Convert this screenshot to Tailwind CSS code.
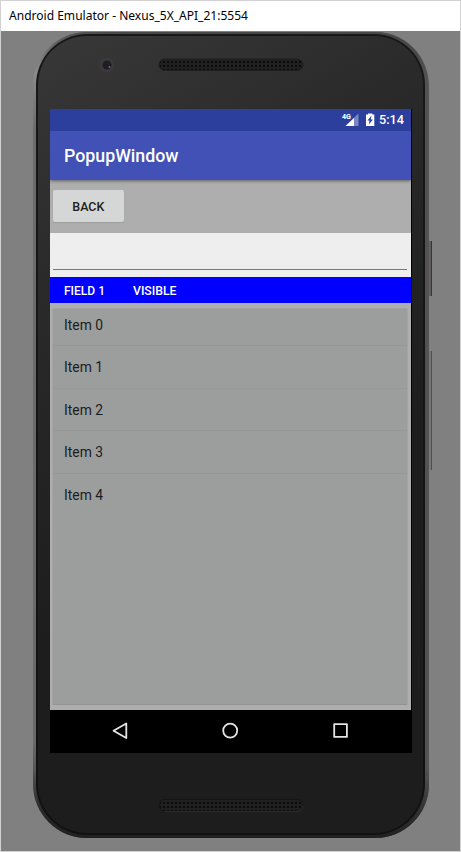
<!DOCTYPE html>
<html lang="en">
<head>
<meta charset="utf-8">
<title>Android Emulator</title>
<script src="https://cdn.jsdelivr.net/npm/@tailwindcss/browser@4"></script>
</head>
<body class="w-[461px] h-[852px] overflow-hidden font-[Roboto,sans-serif]">
<div class="w-full h-full flex flex-col border border-[#d2d2d2] bg-[#808080]">
  <header class="h-[30px] shrink-0 bg-white flex items-center pl-2 text-black">
    <svg class="block" width="300" height="30"><text x="0" y="19" font-family="Noto Sans, sans-serif" font-size="12.5" textLength="239" lengthAdjust="spacingAndGlyphs">Android Emulator - Nexus_5X_API_21:5554</text></svg>
  </header>
  <main class="relative ml-8 mt-px w-[396px] h-[806px] shrink-0">
    <div class="absolute left-[395px] top-[209px] w-[4px] h-[55px] bg-[#625e60] border-r border-[#353335]"></div>
    <div class="absolute left-[396px] top-[319px] w-[3px] h-[119px] bg-[#777] border-r border-[#514d4f]"></div>
    <div class="relative h-full rounded-[54px] pl-[3px] pr-[4px] pt-[2px] pb-[3px] bg-[linear-gradient(to_bottom,#555_0%,#8c8c8c_5%,#6c6c6c_12%,#686868_88%,#2c2c2c_100%)]">
     <div class="absolute inset-0 rounded-[54px] bg-[linear-gradient(to_right,transparent_4%,#484848_22%,#484848_97%,#555)]"></div>
     <div class="absolute inset-x-0 bottom-0 h-[70px] rounded-b-[54px] bg-linear-to-b from-transparent to-[#202020]"></div>
     <div class="relative h-full rounded-[51px] p-[2px] bg-linear-to-b from-[#181818] to-[#111]">
      <div class="h-full rounded-[49px] flex flex-col pl-[12px] bg-[linear-gradient(150deg,#383838,#2a2a2a_25%,#1d1d1d_60%,#1d1d1d)]">
       <div class="h-[73px] shrink-0 relative flex">
         <svg class="block" width="360" height="73">
          <defs>
            <pattern id="mesh" width="4" height="4" patternUnits="userSpaceOnUse"><rect width="4" height="4" fill="#202020"/><rect x="1" y="1" width="2" height="2" fill="#0b0b0b"/></pattern>
          </defs>
          <circle cx="56.500" cy="29" r="7.500" fill="#3b3939"/><circle cx="57" cy="29" r="4.500" fill="#1f1e27"/><circle cx="59.500" cy="31" r="1" fill="#806070"/>
          <rect x="109" y="23" width="144" height="11.500" rx="5.700" fill="url(#mesh)" stroke="#1e1e1e"/>
         </svg>
       </div>
       <section class="w-[362px] h-[644px] shrink-0 flex flex-col bg-black">
        <div class="w-[361px] h-[601px] flex flex-col bg-[#aeaeae]">
         <div class="h-[22px] shrink-0 bg-[#2d3f9d] flex justify-end">
          <svg class="block" width="80" height="22">
            <text x="11" y="9.800" font-size="7.500" font-weight="700" fill="#fff" textLength="9" lengthAdjust="spacingAndGlyphs">4G</text>
            <path d="M27.500 4.500V17H14.500z" fill="#7b86c2"/><path d="M23 9V17H14.500z" fill="#fff"/>
            <path d="M35 5.500h2V4.500h4.300v1h2V17H35z" fill="#fff"/><path d="M40.500 6.500L36.500 11.500h2l-.7 4L42 10.500h-2.200z" fill="#2d3f9d"/>
            <text x="48" y="15.300" font-size="12.700" font-weight="500" fill="#fff" textLength="25" lengthAdjust="spacingAndGlyphs">5:14</text>
          </svg>
         </div>
         <div class="h-[49px] shrink-0 bg-[#4151b5] shadow-[0_1px_3px_rgba(0,0,0,.45)] [clip-path:inset(0_0_-6px_0)]">
          <svg class="block" width="200" height="49"><text x="14" y="31.300" font-size="17.500" font-weight="500" fill="#fff" textLength="114.500" lengthAdjust="spacingAndGlyphs">PopupWindow</text></svg>
         </div>
         <div class="h-[53px] shrink-0 pt-[10px] pl-[3px]">
          <button class="block w-[71px] h-[32px] rounded-[2px] bg-[#d5d7d6] shadow-[0_1px_1px_rgba(0,0,0,.1)]"><svg class="block" width="71" height="32"><text x="19.300" y="21.200" font-size="12.300" font-weight="500" fill="#202020" textLength="32" lengthAdjust="spacingAndGlyphs">BACK</text></svg></button>
         </div>
         <div class="h-[44px] shrink-0 bg-[#eee] pt-[36px] px-[3px]"><div class="h-px w-[354px] bg-[#777]"></div></div>
         <div class="h-[26px] shrink-0 bg-[#0000ff]">
          <svg class="block" width="200" height="26" font-size="12.300" font-weight="500" fill="#fff"><text x="14" y="18" textLength="41" lengthAdjust="spacingAndGlyphs">FIELD 1</text><text x="83" y="18" textLength="43.500" lengthAdjust="spacingAndGlyphs">VISIBLE</text></svg>
         </div>
         <div class="flex-1 pt-[5px] px-[2px] pb-[5px]">
          <div class="h-full w-[356px] rounded-[2px] bg-[#9c9e9d] border border-[#a3a5a4] border-b-[#929493] text-[#1b1c1c]">
           <div class="h-[37px] border-b border-[#969897]"><svg class="block" width="200" height="36"><text x="11" y="20.500" font-size="14" fill="currentColor" textLength="39" lengthAdjust="spacingAndGlyphs">Item 0</text></svg></div>
           <div class="h-[42.500px] border-b border-[#969897]"><svg class="block" width="200" height="41"><text x="11" y="26" font-size="14" fill="currentColor" textLength="39" lengthAdjust="spacingAndGlyphs">Item 1</text></svg></div>
           <div class="h-[42.500px] border-b border-[#969897]"><svg class="block" width="200" height="41"><text x="11" y="26" font-size="14" fill="currentColor" textLength="39" lengthAdjust="spacingAndGlyphs">Item 2</text></svg></div>
           <div class="h-[42.500px] border-b border-[#969897]"><svg class="block" width="200" height="41"><text x="11" y="26" font-size="14" fill="currentColor" textLength="39" lengthAdjust="spacingAndGlyphs">Item 3</text></svg></div>
           <div class="h-[42.500px]"><svg class="block" width="200" height="41"><text x="11" y="26" font-size="14" fill="currentColor" textLength="39" lengthAdjust="spacingAndGlyphs">Item 4</text></svg></div>
          </div>
         </div>
        </div>
        <nav class="h-[43px] shrink-0">
         <svg class="block" width="362" height="43" fill="none" stroke="#e4e4e4" stroke-width="1.800" stroke-linejoin="round"><path d="M76.300 13.500v14.500L63.500 20.700z"/><circle cx="180.200" cy="20.600" r="7"/><rect x="284.200" y="14.200" width="12.700" height="12.700"/></svg>
        </nav>
       </section>
       <svg class="block shrink-0" width="360" height="74"><rect x="109" y="46.500" width="144" height="11.500" rx="5.700" fill="url(#mesh)" stroke="#151515"/><path d="M115 58.500h132q6 0 6-6" fill="none" stroke="#2c2c2c"/></svg>
      </div>
     </div>
    </div>
  </main>
</div>
</body>
</html>
